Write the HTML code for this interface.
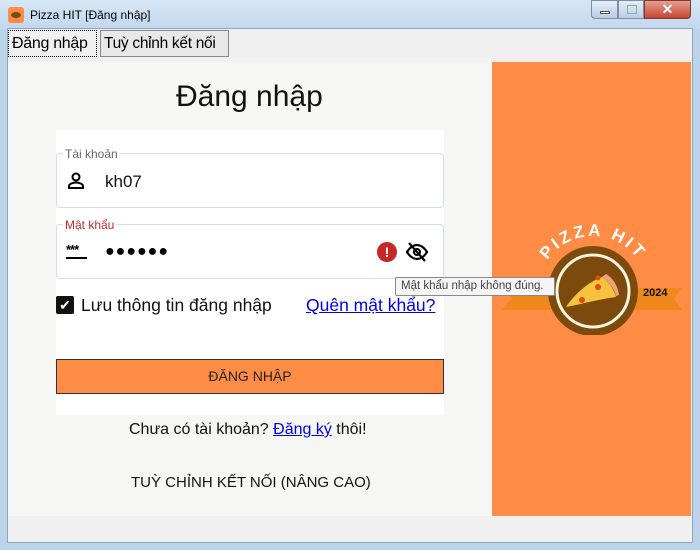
<!DOCTYPE html>
<html><head><meta charset="utf-8"><style>
*{margin:0;padding:0;box-sizing:border-box}
body{width:700px;height:550px;overflow:hidden;background:#bcd3ea;font-family:"Liberation Sans",sans-serif;position:relative}
.abs{position:absolute}
.title{left:0;top:0;width:700px;height:29px;background:linear-gradient(#d7e6f5,#c2d8ee)}
.client{left:7px;top:28px;width:686px;height:515px;background:#f0f0f0;border:1px solid #8ea6bf}
.tab{top:30px;height:27px;font-size:16px;line-height:25px;padding:0 3px;border:1px solid #888;background:#e8e8e8;white-space:nowrap;letter-spacing:-0.3px}
.panel{left:8px;top:62px;width:484px;height:454px;background:#f6f6f4}
.orange{left:492px;top:62px;width:199px;height:454px;background:#ff8c45}
.field{left:56px;width:388px;height:55px;border:1px solid #d6dde6;border-radius:4px;background:#fff}
.lbl{font-size:12px;background:#fff;padding:0 2px}
</style></head><body>
<div class="abs title"></div>
<div class="abs" style="left:8px;top:7px;width:16px;height:16px;background:#ff8c45;border-radius:3px"><div style="margin:5px 3px;width:10px;height:6px;border-radius:50%;background:#7a4a10"></div></div>
<div class="abs" style="left:30px;top:8px;font-size:12px;color:#000">Pizza HIT [Đăng nhập]</div>
<div class="abs" style="left:591px;top:0;width:27px;height:19px;background:linear-gradient(#e6eef7,#b9cde3);border:1px solid #7c8ea3;border-radius:0 0 0 4px"><div style="margin:10px 8px;width:10px;height:3px;background:#fff;border:1px solid #555"></div></div>
<div class="abs" style="left:618px;top:0;width:26px;height:19px;background:linear-gradient(#e6eef7,#b9cde3);border:1px solid #7c8ea3"><div style="margin:4px 8px;width:10px;height:9px;border:1px solid #8aa"></div></div>
<div class="abs" style="left:644px;top:0;width:47px;height:19px;background:linear-gradient(#e8a090,#c74331);border:1px solid #7c3a30;border-radius:0 0 4px 0;color:#fff;font-weight:bold;text-align:center;font-size:14px;line-height:17px">✕</div>
<div class="abs client"></div>
<div class="abs tab" style="left:8px;width:89px;border:1px dotted #000;background:#f0f0f0;top:30px">Đăng nhập</div>
<div class="abs tab" style="left:100px;width:129px;font-size:15.5px">Tuỳ chỉnh kết nối</div>
<div class="abs panel"></div>
<div class="abs" style="left:56px;top:130px;width:388px;height:285px;background:#fff"></div>
<div class="abs orange"></div>
<div class="abs" style="left:176px;top:80px;font-size:30px;color:#111">Đăng nhập</div>
<div class="abs field" style="top:153px"></div>
<div class="abs lbl" style="left:63px;top:147px;color:#666">Tài khoản</div>
<svg class="abs" style="left:66px;top:171px" width="20" height="20" viewBox="0 0 20 20"><circle cx="10" cy="6" r="3.5" fill="none" stroke="#000" stroke-width="2"/><path d="M3 17v-2c0-2 4-3.5 7-3.5s7 1.5 7 3.5v2z" fill="none" stroke="#000" stroke-width="2"/></svg>
<div class="abs" style="left:105px;top:172px;font-size:17px;color:#111">kh07</div>
<div class="abs field" style="top:224px"></div>
<div class="abs lbl" style="left:63px;top:218px;color:#c62828">Mật khẩu</div>
<div class="abs" style="left:66px;top:242px;font-size:13px;font-weight:bold;letter-spacing:-1px">***</div>
<div class="abs" style="left:66px;top:257px;width:21px;height:2px;background:#000"></div>
<div class="abs" style="left:105px;top:243px;font-size:16px;letter-spacing:1px">●●●●●●</div>
<div class="abs" style="left:377px;top:242px;width:20px;height:20px;border-radius:50%;background:#c62828;color:#fff;font-weight:bold;font-size:14px;text-align:center;line-height:20px">!</div>
<svg class="abs" style="left:405px;top:241px" width="24" height="22" viewBox="0 0 24 22"><path d="M2 11c3-5 7-7 10-7s7 2 10 7c-3 5-7 7-10 7s-7-2-10-7z" fill="none" stroke="#000" stroke-width="2.2"/><circle cx="12" cy="11" r="3" fill="none" stroke="#000" stroke-width="2"/><path d="M4 2l16 18" stroke="#000" stroke-width="2.2"/></svg>
<div class="abs" style="left:56px;top:296px;width:18px;height:18px;background:#111;border-radius:2px;color:#fff;font-size:14px;text-align:center;line-height:18px">✔</div>
<div class="abs" style="left:81px;top:295px;font-size:17.5px;color:#111">Lưu thông tin đăng nhập</div>
<div class="abs" style="left:306px;top:295px;font-size:17.5px;color:#0000ee;text-decoration:underline">Quên mật khẩu?</div>
<div class="abs" style="left:56px;top:359px;width:388px;height:35px;background:#ff8c45;border:1px solid #333;font-size:14px;text-align:center;line-height:33px;color:#222">ĐĂNG NHẬP</div>
<div class="abs" style="left:129px;top:421px;font-size:16px;color:#111">Chưa có tài khoản? <span style="color:#0000ee;text-decoration:underline">Đăng ký</span> thôi!</div>
<div class="abs" style="left:131px;top:474px;font-size:15px;color:#111">TUỲ CHỈNH KẾT NỐI (NÂNG CAO)</div>
<svg class="abs" style="left:500px;top:205px" width="190" height="130" viewBox="0 -20 190 130">
<path d="M2 63h180l-8 10 8 12H2l10-12z" fill="#f0891d"/>
<circle cx="93" cy="66" r="45" fill="#7b4a0c"/>
<circle cx="93" cy="66" r="36" fill="none" stroke="#fff4de" stroke-width="3"/>
<path d="M66 82c8-12 22-25 36-30c6 4 12 12 14 20c-16 2-34 7-50 10z" fill="#f7c23c"/><path d="M102 52l4-3c7 4 12 12 13 21l-3 1c-2-8-8-15-14-19z" fill="#f2a07a"/>
<circle cx="98" cy="62" r="3" fill="#e24a1f"/><circle cx="82" cy="75" r="3" fill="#e24a1f"/><circle cx="98" cy="53" r="2.5" fill="#e24a1f"/>
<text x="143" y="71" font-size="11" font-weight="bold" font-family="Liberation Sans" fill="#111">2024</text>
<path id="arc" d="M38 66a55 55 0 0 1 110 0" fill="none"/>
<text font-size="17" font-weight="bold" font-family="Liberation Sans" fill="#fff" letter-spacing="3" text-anchor="middle"><textPath href="#arc" startOffset="50%">PIZZA HIT</textPath></text>
</svg>
<div class="abs" style="left:395px;top:277px;width:160px;height:19px;background:#f5f5f5;border:1px solid #888;border-radius:2px;font-size:11.5px;color:#444;padding:2px 5px;white-space:nowrap">Mật khẩu nhập không đúng.</div>
</body></html>
